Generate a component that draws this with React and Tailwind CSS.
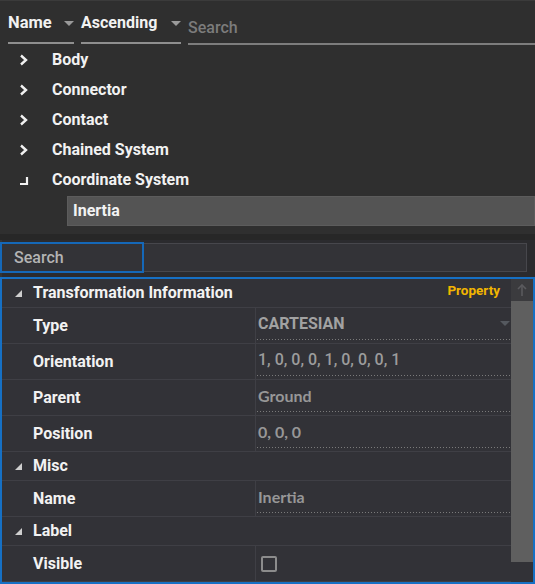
import React from "react";

const tree = [
  { name: "Body", state: "closed" },
  { name: "Connector", state: "closed" },
  { name: "Contact", state: "closed" },
  { name: "Chained System", state: "closed" },
  { name: "Coordinate System", state: "open" },
];

/* property grid rows */
const rows = [
  { kind: "cat", label: "Transformation Information", tag: "Property" },
  { kind: "prop", label: "Type", value: "CARTESIAN", bold: true, dropdown: true },
  { kind: "prop", label: "Orientation", value: "1, 0, 0, 0, 1, 0, 0, 0, 1" },
  { kind: "prop", label: "Parent", value: "Ground", lato: true },
  { kind: "prop", label: "Position", value: "0, 0, 0", lato: true },
  { kind: "cat", label: "Misc" },
  { kind: "prop", label: "Name", value: "Inertia", lato: true },
  { kind: "cat", label: "Label" },
  { kind: "prop", label: "Visible", check: true },
];

function Caret() {
  return (
    <svg width="10" height="6" viewBox="0 0 10 6">
      <polygon points="0,0 10,0 5,5" fill="#9a9a9a" />
    </svg>
  );
}

function Chevron() {
  return (
    <svg width="10" height="12" viewBox="0 0 10 12">
      <polyline points="2,1.5 7,6 2,10.5" fill="none" stroke="#f2f2f2" strokeWidth="2.4" />
    </svg>
  );
}

function Corner() {
  return (
    <svg width="10" height="12" viewBox="0 0 10 12">
      <polyline points="1,10 8,10 8,3" fill="none" stroke="#f2f2f2" strokeWidth="2.2" />
    </svg>
  );
}

function Dots() {
  return (
    <div className="h-px w-full bg-[linear-gradient(to_right,#7a7a7a_1px,transparent_1px)] bg-[length:3px_1px] bg-repeat-x" />
  );
}

export default function App() {
  return (
    <div className="w-[535px] h-[584px] overflow-hidden bg-[#2a2a2a] flex flex-col font-['Roboto',sans-serif]">
      {/* ===== TREE PANEL ===== */}
      <div className="h-[234px] bg-[#2f2f2f] border-t border-[#3b3b3b] flex flex-col">
        <div className="h-[43px] flex items-end pl-2">
          <div className="w-[66px] h-[32px] border-b-2 border-[#8f8f8f] flex justify-between pt-[1px]">
            <span className="text-[16.5px] leading-5 font-bold text-[#f2f2f2]">Name</span>
            <span className="mt-[8px]"><Caret /></span>
          </div>
          <div className="ml-[7px] w-[100px] h-[32px] border-b-2 border-[#8f8f8f] flex justify-between pt-[1px]">
            <span className="text-[16px] leading-5 font-bold text-[#f2f2f2]">Ascending</span>
            <span className="mt-[8px]"><Caret /></span>
          </div>
          <div className="ml-[7px] flex-1 h-[33px] mb-[-1px] border-b-2 border-[#7d7d7d] pt-[4px]">
            <span className="text-[16px] leading-5 font-medium text-[#7c7c7c]">Search</span>
          </div>
        </div>

        <div className="mt-[1px]">
          {tree.map((t) => (
            <div key={t.name} className="h-[30px] flex items-center">
              <span className="w-[52px] pl-[19px] flex items-center">
                {t.state === "open" ? <Corner /> : <Chevron />}
              </span>
              <span className="text-[16px] font-bold text-[#f2f2f2]">{t.name}</span>
            </div>
          ))}
          <div className="h-[30px] ml-[67px] mt-[1px] bg-[#545454] border border-[#5c5c5c] flex items-center pl-[5px]">
            <span className="text-[16px] font-bold text-[#f2f2f2]">Inertia</span>
          </div>
        </div>
      </div>

      <div className="h-[6px] bg-[#272727]" />

      {/* ===== SEARCH ===== */}
      <div className="h-[37px] bg-[#2b2b2e] pt-[2px] border-l-2 border-[#343434]">
        <div className="flex h-[31px] w-[527px] ml-[-2px]">
          <div className="w-[144px] h-full border-2 border-[#1568b8] bg-[#333337] flex items-center pl-[12px]">
            <span className="text-[16px] font-medium text-[#b4b4b4]">Search</span>
          </div>
          <div className="flex-1 my-[1px] bg-[#333337] border-y border-r border-[#47474c]" />
        </div>
      </div>

      {/* ===== PROPERTY GRID ===== */}
      <div className="h-[307px] border-2 border-[#1670c4] bg-[#323237] flex">
        <div className="w-[509px] flex flex-col">
          {rows.map((r) =>
            r.kind === "cat" ? (
              <div key={r.label} className="h-[29px] border-b border-[#3f3f45] flex items-center">
                <span className="w-[31px] pl-[13px] flex items-center">
                  <svg width="7" height="7" viewBox="0 0 7 7">
                    <polygon points="7,0 7,7 0,7" fill="#cfcfcf" />
                  </svg>
                </span>
                <span className="text-[16px] font-bold text-[#f2f2f2]">{r.label}</span>
                {r.tag && (
                  <span className="ml-auto mr-[11px] -mt-[6px] text-[13.5px] font-bold text-[#f2b600]">{r.tag}</span>
                )}
              </div>
            ) : (
              <div key={r.label} className="h-[36px] border-b border-[#3f3f45] flex">
                <div className="w-[254px] border-r border-[#3f3f45] flex items-center pl-[31px]">
                  <span className="text-[16px] font-bold text-[#f2f2f2]">{r.label}</span>
                </div>
                <div className="flex-1 flex flex-col pl-[1px]">
                  <div className="flex-1 flex items-center pl-[1px] pt-[1px]">
                    {r.check ? (
                      <span className="ml-[3px] w-[16px] h-[16px] border-2 border-[#8c8c8c] rounded-[2px]" />
                    ) : (
                      <span
                        className={
                          r.lato
                            ? "text-[16px] font-bold text-[#979797] font-['Lato',sans-serif]"
                            : r.bold
                            ? "text-[16px] font-bold text-[#a2a2a2]"
                            : "text-[16px] font-medium text-[#9c9c9c]"
                        }
                      >
                        {r.value}
                      </span>
                    )}
                    {r.dropdown && (
                      <svg className="ml-auto mr-[1px]" width="10" height="6" viewBox="0 0 10 6">
                        <polygon points="0,0 10,0 5,5" fill="#55595f" />
                      </svg>
                    )}
                  </div>
                  {!r.check && (
                    <div className="h-[4px]">
                      <Dots />
                    </div>
                  )}
                </div>
              </div>
            )
          )}
        </div>

        {/* scrollbar */}
        <div className="flex-1 flex flex-col">
          <div className="h-[22px] bg-[#3b3b3e] flex items-center justify-center">
            <svg width="10" height="12" viewBox="0 0 10 12">
              <polyline points="1,5 5,1 9,5" fill="none" stroke="#5a5a5e" strokeWidth="1.6" />
              <line x1="5" y1="1" x2="5" y2="12" stroke="#5a5a5e" strokeWidth="1.6" />
            </svg>
          </div>
          <div className="h-[261px] bg-[#5f5f5f]" />
        </div>
      </div>
    </div>
  );
}
